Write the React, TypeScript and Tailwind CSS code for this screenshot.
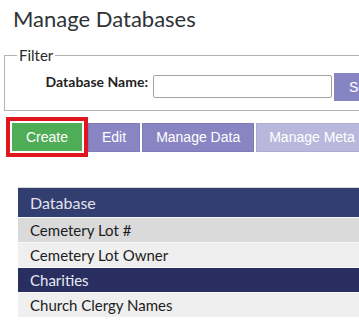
const rows = [
  { name: "Cemetery Lot #", bg: "bg-[#dadada]", text: "text-[#1c1c1c]" },
  { name: "Cemetery Lot Owner", bg: "bg-[#efefef]", text: "text-[#1c1c1c]" },
  { name: "Charities", bg: "bg-[#282e60]", text: "text-[#e9e9f1]" },
  { name: "Church Clergy Names", bg: "bg-[#efefef]", text: "text-[#1c1c1c]" },
];

export default function App() {
  return (
    <div className="w-[359px] h-[320px] overflow-hidden bg-white font-['Lato','Liberation_Sans',sans-serif]">
      {/* Title */}
      <h1 className="pl-[13px] pt-[6px] text-[22px] leading-[26px] text-[#2e3338] whitespace-nowrap">
        Manage Databases
      </h1>

      {/* Filter */}
      <fieldset className="ml-[4px] mt-[16px] w-[400px] border border-[#b4b4b4] pb-[9px]">
        <legend className="ml-[12px] px-[2px] text-[15px] leading-[15px] text-[#2a2a2a]">
          Filter
        </legend>
        <div className="mt-[10px] flex items-start">
          <div className="w-[143px] shrink-0 pt-[2px] text-right text-[14px] leading-[14px] font-bold text-[#1f1f1f] whitespace-nowrap">
            Database Name:
          </div>
          <input
            type="text"
            className="ml-[5px] mt-[2px] h-[23px] w-[179px] shrink-0 rounded-[2px] border border-[#a3a3a3] bg-white"
          />
          <button className="ml-[2px] h-[28px] shrink-0 bg-[#8784c3] px-[15px] font-['Liberation_Sans',sans-serif] text-[14px] text-white">
            Search
          </button>
        </div>
      </fieldset>

      {/* Actions */}
      <div className="mt-[6px] flex items-center whitespace-nowrap font-['Liberation_Sans',sans-serif] text-[14px] text-white">
        <div className="ml-[6px] shrink-0 border-4 border-[#e0161e] p-[2px]">
          <button className="block h-[28px] w-[70px] bg-[#4fad57]">Create</button>
        </div>
        <button className="h-[29px] shrink-0 border border-[#7f7bbb] bg-[#8985c3] px-[13px]">
          Edit
        </button>
        <button className="ml-[2px] h-[29px] shrink-0 border border-[#7f7bbb] bg-[#8985c3] px-[13px]">
          Manage Data
        </button>
        <button className="ml-[2px] h-[29px] shrink-0 border border-[#adabd4] bg-[#b9b8dc] px-[12px]">
          Manage Meta
        </button>
      </div>

      {/* Table */}
      <div className="ml-[18px] mt-[30px] w-[360px] border-t border-[#d6d6d6]">
        <div className="flex h-[29px] items-center bg-[#323e70] pl-[12px] text-[16px] text-[#e2e3ec]">
          Database
        </div>
        {rows.map((row) => (
          <div
            key={row.name}
            className={`flex h-[25px] items-center border-t border-[#f8f8f8] pl-[12px] text-[15px] whitespace-nowrap ${row.bg} ${row.text}`}
          >
            {row.name}
          </div>
        ))}
      </div>
    </div>
  );
}
